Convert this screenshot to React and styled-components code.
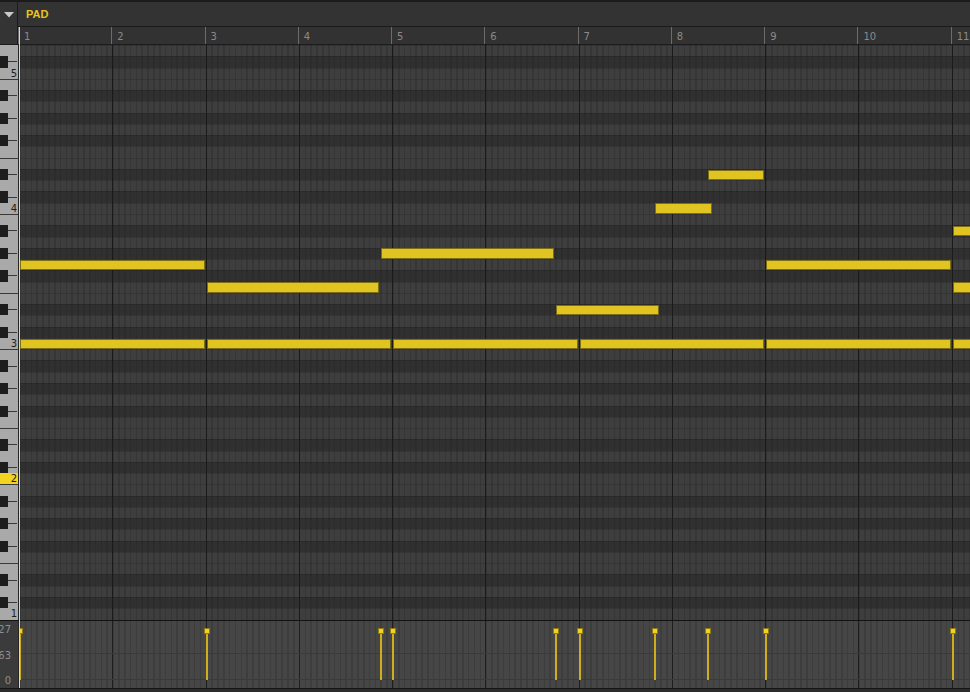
import React from "react";
import styled, { createGlobalStyle } from "styled-components";

const BAR = 93.27;
const SIX = BAR / 16;
const ROWS = 51;
const ROW = 575 / ROWS;
const BLACK = [1, 3, 6, 8, 10];

// top row is D5, going down one semitone per row
const rows = Array.from({ length: ROWS }, (_, i) => {
  const n = 2 - i;
  const pc = ((n % 12) + 12) % 12;
  const oct = 5 + Math.floor(n / 12);
  return { pc, oct, black: BLACK.includes(pc) };
});

const rowOf = (pc, oct) => (5 - oct) * 12 + 2 - pc;

const notes = [
  { pc: 7, oct: 3, s: 0, l: 2 },
  { pc: 0, oct: 3, s: 0, l: 2 },
  { pc: 5, oct: 3, s: 2, l: 1.875 },
  { pc: 0, oct: 3, s: 2, l: 2 },
  { pc: 8, oct: 3, s: 3.875, l: 1.875 },
  { pc: 0, oct: 3, s: 4, l: 2 },
  { pc: 3, oct: 3, s: 5.75, l: 1.125 },
  { pc: 0, oct: 3, s: 6, l: 2 },
  { pc: 0, oct: 4, s: 6.8125, l: 0.625 },
  { pc: 3, oct: 4, s: 7.375, l: 0.625 },
  { pc: 7, oct: 3, s: 8, l: 2 },
  { pc: 0, oct: 3, s: 8, l: 2 },
  { pc: 10, oct: 3, s: 10, l: 1 },
  { pc: 5, oct: 3, s: 10, l: 1 },
  { pc: 0, oct: 3, s: 10, l: 1 },
];

const starts = [...new Set(notes.map((n) => n.s))];

const GlobalStyle = createGlobalStyle`
  body {
    margin: 0;
    background: #222;
    font-family: "DejaVu Sans", "Liberation Sans", sans-serif;
  }
`;

const Root = styled.div`
  position: relative;
  width: 970px;
  height: 692px;
  display: flex;
  flex-direction: column;
  overflow: hidden;
  background: #2a2a2a;
`;

const Top = styled.div`
  display: flex;
  height: 45px;
  flex-shrink: 0;
`;

const Corner = styled.div`
  width: 18px;
  border-right: 1px solid #1b1b1b;
  border-top: 2px solid #1b1b1b;
  border-bottom: 1px solid #1b1b1b;
  background: #343434;
  display: flex;
  justify-content: center;
  padding-top: 10px;
  box-sizing: border-box;
  svg {
    display: block;
  }
`;

const TopRight = styled.div`
  flex: 1;
  display: flex;
  flex-direction: column;
  min-width: 0;
`;

const Header = styled.div`
  height: 27px;
  box-sizing: border-box;
  border-top: 2px solid #1b1b1b;
  border-bottom: 1px solid #1b1b1b;
  background: #333;
  display: flex;
  align-items: center;
  padding-left: 8px;
  color: #e6c51f;
  font-size: 11px;
  font-weight: bold;
  font-family: "Liberation Sans", sans-serif;
`;

const Ruler = styled.div`
  height: 18px;
  box-sizing: border-box;
  border-bottom: 1px solid #1b1b1b;
  background: #323232;
  display: flex;
  overflow: hidden;
`;

const RulerCell = styled.div`
  width: ${BAR}px;
  flex-shrink: 0;
  box-sizing: border-box;
  border-left: 1px solid #6c6c6c;
  padding: 4px 0 0 5px;
  font-size: 10px;
  color: #8a8a8a;
`;

const Main = styled.div`
  display: flex;
  height: 575px;
  flex-shrink: 0;
`;

const Keyboard = styled.div`
  width: 18px;
  border-right: 1px solid #262626;
  display: flex;
  flex-direction: column;
  background: #a9a9a9;
`;

const KeyRow = styled.div`
  height: ${ROW}px;
  flex-shrink: 0;
  box-sizing: border-box;
  display: flex;
  align-items: center;
  justify-content: flex-end;
  border-top: ${(p) => (p.$line ? "1px solid #3a3a3a" : "none")};
  background: ${(p) => (p.$hot ? "#f3d31f" : "transparent")};
  font-size: 10px;
  color: #1e1e1e;
  padding-right: 1px;
`;

const BlackKey = styled.div`
  width: 8px;
  height: 100%;
  background: #1d1d1d;
  flex-shrink: 0;
`;

const KeyLine = styled.div`
  flex: 1;
  height: 1px;
  background: #3a3a3a;
`;

const Grid = styled.div`
  position: relative;
  flex: 1;
  display: flex;
  flex-direction: column;
  overflow: hidden;
  &::after {
    content: "";
    position: absolute;
    inset: 0;
    background: repeating-linear-gradient(
      90deg,
      #1a1a1a 0 1px,
      transparent 1px ${BAR}px
    );
    pointer-events: none;
  }
`;

const GridRow = styled.div`
  height: ${ROW}px;
  flex-shrink: 0;
  box-shadow: inset 0 1px 0 rgba(0, 0, 0, 0.12);
  background: ${(p) =>
    p.$black
      ? `repeating-linear-gradient(90deg, #2c2c2c 0 1.6px, #303030 1.6px ${SIX}px)`
      : `repeating-linear-gradient(90deg, #363636 0 1.6px, #3e3e3e 1.6px ${SIX}px)`};
`;

const Note = styled.div`
  position: absolute;
  z-index: 2;
  height: ${ROW - 1}px;
  box-sizing: border-box;
  background: #e0c422;
  border: 1px solid #7d6e16;
`;

const Divider = styled.div`
  height: 1px;
  background: #121212;
  flex-shrink: 0;
`;

const Velocity = styled.div`
  display: flex;
  height: 67px;
  flex-shrink: 0;
`;

const VelLabels = styled.div`
  width: 18px;
  border-right: 1px solid #262626;
  background: #3b3b3b;
  overflow: hidden;
  display: flex;
  flex-direction: column;
  align-items: flex-end;
  justify-content: space-between;
  padding: 3px 7px 2px 0;
  box-sizing: content-box;
  height: 62px;
  font-size: 10px;
  color: #8e8e8e;
  white-space: nowrap;
  margin-left: -7px;
`;

const VelLane = styled.div`
  position: relative;
  flex: 1;
  overflow: hidden;
  background:
    linear-gradient(
      180deg,
      transparent 32px,
      #3a3a3a 32px 33px,
      transparent 33px 58px,
      #3a3a3a 58px 59px,
      transparent 59px
    ),
    repeating-linear-gradient(90deg, #1e1e1e 0 1px, transparent 1px ${BAR}px),
    repeating-linear-gradient(90deg, #3d3d3d 0 1.6px, #464646 1.6px ${SIX}px);
`;

const Marker = styled.div`
  position: absolute;
  top: 7px;
  width: 6px;
  height: 52px;
  display: flex;
  flex-direction: column;
  align-items: center;
  z-index: 2;
`;

const MarkerHead = styled.div`
  width: 6px;
  height: 6px;
  box-sizing: border-box;
  background: #f2d21e;
  border: 1px solid #8f7b12;
  flex-shrink: 0;
`;

const MarkerStem = styled.div`
  width: 2px;
  flex: 1;
  background: #cfae1b;
`;

const Bottom = styled.div`
  flex: 1;
  background: #2c2c2c;
  border-top: 1px solid #161616;
`;

const Playhead = styled.div`
  position: absolute;
  left: 19px;
  top: 27px;
  bottom: 4px;
  width: 1px;
  background: #d6d6d6;
  z-index: 5;
`;

export default function App() {
  return (
    <>
      <GlobalStyle />
      <Root>
        <Top>
          <Corner>
            <svg width="10" height="6" viewBox="0 0 10 6">
              <path d="M0 0 H10 L5 5.5 Z" fill="#c9c9c9" />
            </svg>
          </Corner>
          <TopRight>
            <Header>PAD</Header>
            <Ruler>
              {Array.from({ length: 11 }, (_, i) => (
                <RulerCell key={i}>{i + 1}</RulerCell>
              ))}
            </Ruler>
          </TopRight>
        </Top>
        <Main>
          <Keyboard>
            {rows.map((r, i) => (
              <KeyRow
                key={i}
                $line={r.pc === 11 || r.pc === 4}
                $hot={r.pc === 0 && r.oct === 2}
              >
                {r.black ? (
                  <>
                    <BlackKey />
                    <KeyLine />
                  </>
                ) : r.pc === 0 ? (
                  r.oct
                ) : null}
              </KeyRow>
            ))}
          </Keyboard>
          <Grid>
            {rows.map((r, i) => (
              <GridRow key={i} $black={r.black} />
            ))}
            {notes.map((n, i) => (
              <Note
                key={i}
                style={{
                  left: n.s * BAR + 1,
                  width: n.l * BAR - 2,
                  top: rowOf(n.pc, n.oct) * ROW + 0.5,
                }}
              />
            ))}
          </Grid>
        </Main>
        <Divider />
        <Velocity>
          <VelLabels>
            <span>127</span>
            <span>63</span>
            <span>0</span>
          </VelLabels>
          <VelLane>
            {starts.map((s) => (
              <Marker key={s} style={{ left: Math.round(s * BAR) - 2 }}>
                <MarkerHead />
                <MarkerStem />
              </Marker>
            ))}
          </VelLane>
        </Velocity>
        <Bottom />
        <Playhead />
      </Root>
    </>
  );
}
